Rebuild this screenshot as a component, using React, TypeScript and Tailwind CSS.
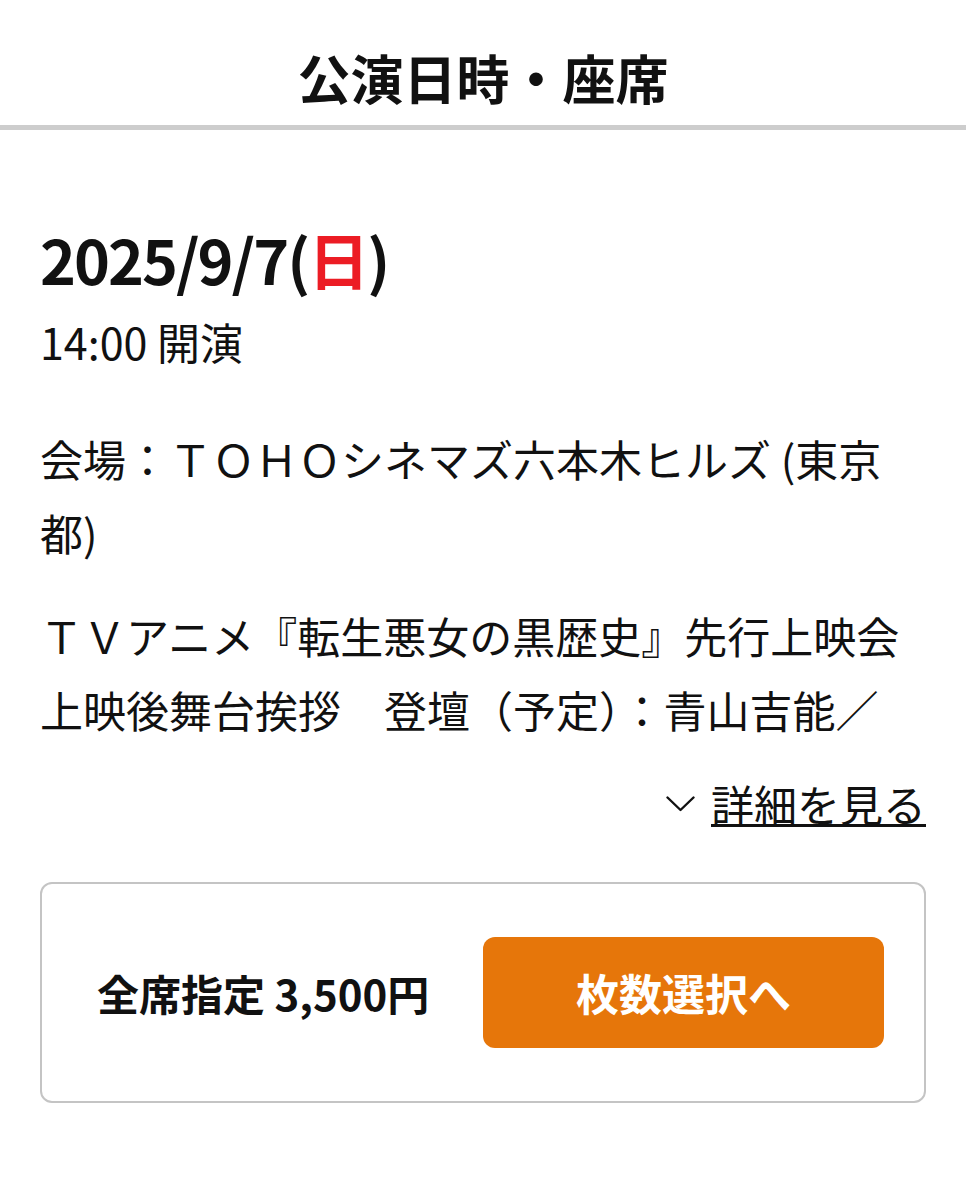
const font = { fontFamily: '"Noto Sans CJK JP", "Noto Sans", sans-serif' }

function ChevronDown() {
  return (
    <svg className="h-[16px] w-[29px]" viewBox="0 0 29 16" fill="none" stroke="currentColor" strokeWidth={2.4}>
      <path d="M1.5 1.5 14.5 14 27.5 1.5" strokeLinecap="round" strokeLinejoin="round" />
    </svg>
  )
}

export default function App() {
  return (
    <div className="min-h-[1200px] bg-white text-[#111]" style={font}>
      <header className="h-[125px] pt-[51px] text-center">
        <h1 className="text-[53px] font-bold leading-none">公演日時・座席</h1>
      </header>
      <div className="h-[5px] bg-[#cdcdcd]" />

      <main className="px-[40px]">
        <p className="mt-[98px] text-[61px] font-semibold leading-none tracking-[-2px]">
          2025/9/7(<span className="text-[#ec1c24]">日</span>)
        </p>
        <p className="mt-[31px] text-[43px] leading-none">14:00 開演</p>

        <p className="mt-[58px] text-[43px] leading-[74px]">
          会場：ＴＯＨＯシネマズ六本木ヒルズ (東京都)
        </p>

        <p className="mt-[29px] h-[148px] text-[43px] leading-[74px]">
          ＴＶアニメ『転生悪女の黒歴史』先行上映会上映後舞台挨拶　登壇（予定）：青山吉能／
        </p>

        <div className="mt-[36px] flex justify-end">
          <button className="flex items-center gap-[16px] text-[43px] leading-none">
            <ChevronDown />
            <span className="underline decoration-[3px] underline-offset-[2px]">詳細を見る</span>
          </button>
        </div>

        <section className="mt-[57px] flex h-[221px] items-center justify-between rounded-[12px] border-2 border-[#c4c4c4] pl-[55px] pr-[40px]">
          <span className="text-[42px] font-bold leading-none">全席指定 3,500円</span>
          <button className="flex h-[111px] w-[401px] items-center justify-center rounded-[12px] bg-[#e6760a] text-[43px] font-bold leading-none text-white">
            枚数選択へ
          </button>
        </section>
      </main>
    </div>
  )
}
